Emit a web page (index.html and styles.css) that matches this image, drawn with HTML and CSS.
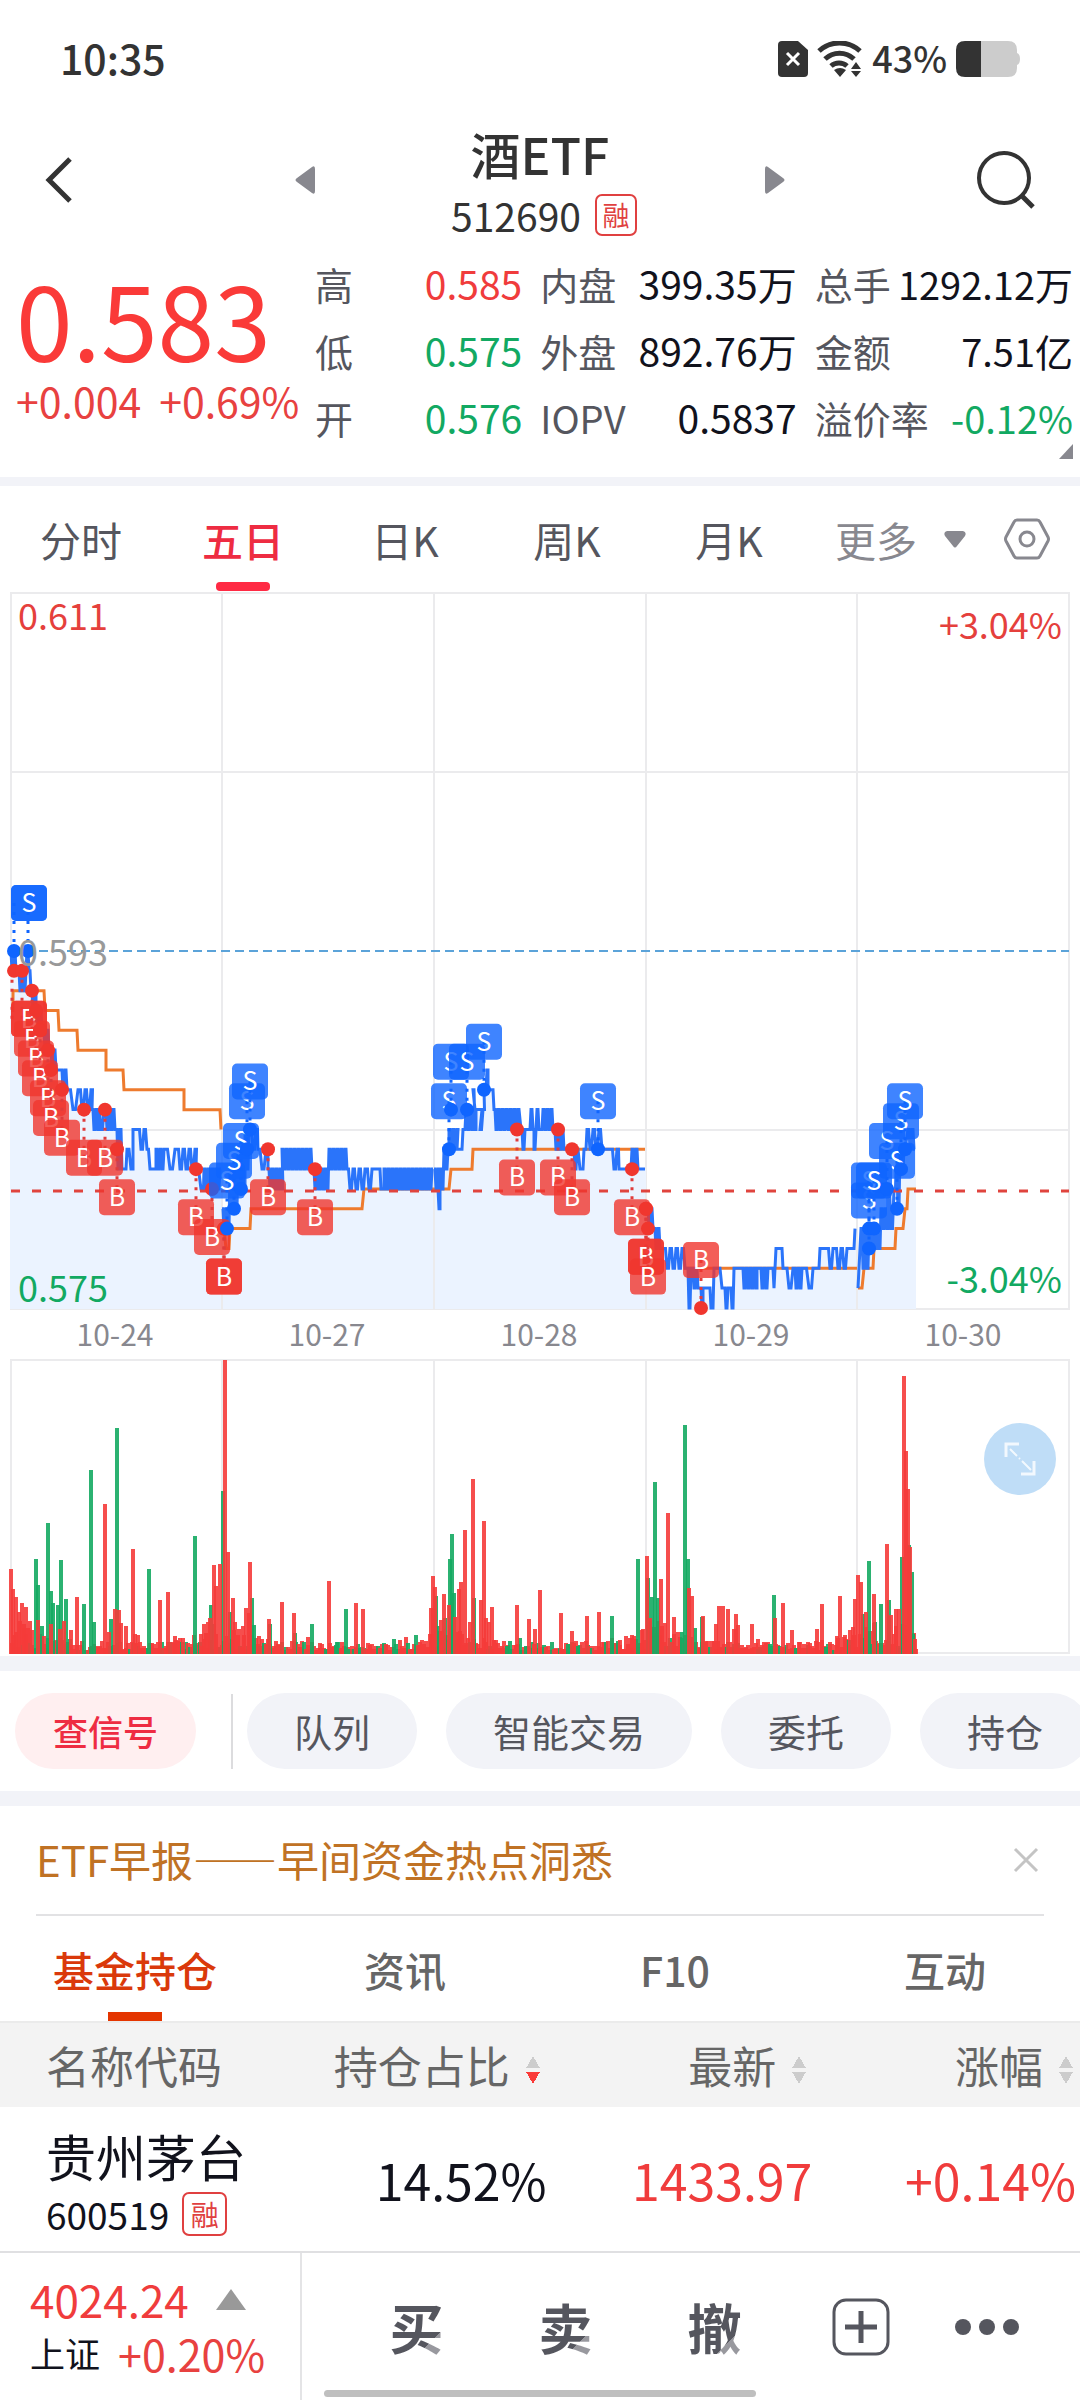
FILE: index.html
```html
<!DOCTYPE html>
<html lang="zh-CN">
<head>
  <meta charset="UTF-8">
  <meta name="viewport" content="width=device-width, initial-scale=1">
  <title>酒ETF 512690</title>
  <link rel="stylesheet" href="styles.css">
</head>
<body>
  <div class="status">
    <span class="time">10:35</span>
    <div class="status-icons">
      <svg width="30" height="36" viewBox="0 0 30 36"><path d="M4 0h16l10 9v23a4 4 0 0 1-4 4H4a4 4 0 0 1-4-4V4a4 4 0 0 1 4-4z" fill="#333"/><path d="M9 12l12 12M21 12L9 24" stroke="#fff" stroke-width="3"/></svg>
      <svg class="wifi" width="46" height="36" viewBox="0 0 46 36" fill="none" stroke="#333" stroke-width="5"><path d="M2 10a30 30 0 0 1 41 0M8 18a21 21 0 0 1 29 0M14 25a12 12 0 0 1 16 0"/><path d="M17 29l6 7 6-7q-6-4-12 0zM34 28l5-7 5 7zM34 30l5 6 5-6z" fill="#333" stroke="none"/></svg>
      <span class="percent">43%</span>
      <svg width="64" height="36" viewBox="0 0 64 36"><path d="M25 0h27q9 0 9 9v3q3 1 3 6t-3 6v3q0 9-9 9H25z" fill="#ccc"/><path d="M25 0H9Q0 0 0 9v18q0 9 9 9h16z" fill="#333"/></svg>
    </div>
  </div>

  <header class="header">
    <button class="icon-btn back" aria-label="返回"><svg width="30" height="48" viewBox="0 0 30 48"><path d="M26 3L5 24l21 21" fill="none" stroke="#333" stroke-width="5"/></svg></button>
    <button class="icon-btn" aria-label="上一只"><svg width="20" height="28" viewBox="0 0 20 28"><path d="M17 1q3-2 3 2v22q0 4-3 2L2 16q-3-2 0-4z" fill="#88888f"/></svg></button>
    <div class="title">
      <h1>酒ETF</h1>
      <div class="code">512690 <span class="tag">融</span></div>
    </div>
    <button class="icon-btn" aria-label="下一只"><svg width="20" height="28" viewBox="0 0 20 28"><path d="M3 1Q0-1 0 3v22q0 4 3 2l15-11q3-2 0-4z" fill="#88888f"/></svg></button>
    <button class="icon-btn search" aria-label="搜索"><svg width="60" height="60" viewBox="0 0 60 60" fill="none" stroke="#333" stroke-width="4"><circle cx="28" cy="28" r="25"/><path d="M45 45l12 12" stroke-width="5"/></svg></button>
  </header>

  <section class="quote">
    <div class="price-box">
      <div class="price">0.583</div>
      <div class="change"><span>+0.004</span><span>+0.69%</span></div>
    </div>
    <dl class="stats s1">
      <div><dt>高</dt><dd class="up">0.585</dd></div>
      <div><dt>低</dt><dd class="down">0.575</dd></div>
      <div><dt>开</dt><dd class="down">0.576</dd></div>
    </dl>
    <dl class="stats s2">
      <div><dt>内盘</dt><dd>399.35万</dd></div>
      <div><dt>外盘</dt><dd>892.76万</dd></div>
      <div><dt>IOPV</dt><dd>0.5837</dd></div>
    </dl>
    <dl class="stats s3">
      <div><dt>总手</dt><dd>1292.12万</dd></div>
      <div><dt>金额</dt><dd>7.51亿</dd></div>
      <div><dt>溢价率</dt><dd class="down">-0.12%</dd></div>
    </dl>
    <span class="corner"></span>
  </section>

  <nav class="periods">
    <button>分时</button>
    <button class="active">五日</button>
    <button>日K</button>
    <button>周K</button>
    <button>月K</button>
    <button class="more">更多 <svg width="22" height="17" viewBox="0 0 22 17"><path d="M3 0h16q4 1 2 5l-8 10q-2 3-4 0L1 5q-2-4 2-5z" fill="#88888f"/></svg></button>
    <button class="gear" aria-label="设置"><svg width="46" height="42" viewBox="0 0 46 42" fill="none" stroke="#88888f" stroke-width="3"><path d="M13 2h20q2 0 3 2l8 15q1 2 0 4l-8 15q-1 2-3 2H13q-2 0-3-2L2 23q-1-2 0-4l8-15q1-2 3-2z"/><circle cx="23" cy="21" r="7"/></svg></button>
  </nav>

  <section class="charts">
    <svg id="chart" viewBox="0 0 1080 1064" role="img" aria-label="五日走势"></svg>
    <button class="expand" aria-label="全屏"><svg width="32" height="34" viewBox="0 0 32 34" fill="none" stroke="#fff"><path d="M15 2H2v13M30 19v13H17" stroke-width="3" opacity=".8"/><path d="M6 7l7 7M15 16l1 1M18 19l9 9" stroke-width="2" opacity=".8"/></svg></button>
  </section>

  <div class="chips">
    <button class="chip signal">查信号</button>
    <span class="divider"></span>
    <button class="chip">队列</button>
    <button class="chip">智能交易</button>
    <button class="chip">委托</button>
    <button class="chip">持仓</button>
  </div>

  <div class="news">
    <a href="#">ETF早报——早间资金热点洞悉</a>
    <button class="icon-btn" aria-label="关闭"><svg width="26" height="26" viewBox="0 0 26 26"><path d="M2 2l22 22M24 2L2 24" stroke="#c4c4c4" stroke-width="3"/></svg></button>
  </div>

  <nav class="tabs">
    <button class="active">基金持仓</button>
    <button>资讯</button>
    <button>F10</button>
    <button>互动</button>
  </nav>

  <table class="holdings">
    <thead>
      <tr>
        <th class="name">名称代码</th>
        <th>持仓占比<i class="sort desc"></i></th>
        <th>最新<i class="sort"></i></th>
        <th>涨幅<i class="sort"></i></th>
      </tr>
    </thead>
    <tbody>
      <tr>
        <td class="name">
          <div class="stock">贵州茅台</div>
          <div class="stock-code">600519 <span class="tag">融</span></div>
        </td>
        <td class="ratio">14.52%</td>
        <td class="last up">1433.97</td>
        <td class="up">+0.14%</td>
      </tr>
    </tbody>
  </table>

  <footer class="bottom">
    <div class="index">
      <div class="index-price up">4024.24 <i class="arrow-up"></i></div>
      <div class="index-change"><span>上证</span><b>+0.20%</b></div>
    </div>
    <div class="actions">
      <button class="trade">买</button>
      <button class="trade">卖</button>
      <button class="trade">撤</button>
      <button aria-label="添加"><svg width="58" height="58" viewBox="0 0 58 58" fill="none" stroke="#55565e"><rect x="2" y="2" width="54" height="54" rx="12" stroke-width="3"/><path d="M29 13v32M13 29h32" stroke-width="5"/></svg></button>
      <button aria-label="更多"><svg width="64" height="16" viewBox="0 0 64 16" fill="#55565e"><circle cx="8" cy="8" r="8"/><circle cx="32" cy="8" r="8"/><circle cx="56" cy="8" r="8"/></svg></button>
    </div>
    <span class="home-bar"></span>
  </footer>

  <script src="chart.js"></script>
</body>
</html>
```
FILE: styles.css
```css
* { box-sizing: border-box; }
body { margin: 0; background: #fff; color: #11121c; font-family: "Noto Sans CJK SC", sans-serif; overflow-x: hidden; }
button { padding: 0; border: none; background: none; font: inherit; color: inherit; cursor: pointer; }
svg { display: block; }
.up { color: #f03c3c; }
.down { color: #12a962; }

.status { display: flex; justify-content: space-between; align-items: center; height: 112px; padding: 6px 60px 0; color: #333; font-weight: 500; }
.time { font-size: 41px; line-height: 56px; padding-bottom: 4px; }
.status-icons { display: flex; align-items: center; gap: 9px; }
.percent { font-size: 36px; line-height: 48px; padding-bottom: 4px; }

.header { display: flex; align-items: center; height: 136px; padding: 0 44px; color: #333; }
.back, .search { flex: 1; }
.search svg { margin-left: auto; }
.title { width: 450px; padding-top: 8px; text-align: center; }
.title h1 { margin: 0; font-size: 50px; line-height: 62px; font-weight: 500; }
.code { display: flex; justify-content: center; align-items: center; gap: 14px; padding-left: 8px; font-size: 39px; line-height: 62px; }
.tag { display: inline-block; width: 42px; border: 2px solid #e04040; border-radius: 7px; color: #e04040; font-size: 27px; line-height: 38px; text-align: center; }

.quote { position: relative; display: flex; height: 238px; padding: 2px 7px 0 0; border-bottom: 9px solid #f2f3f8; }
.price-box { flex: none; width: 315px; padding: 10px 0 0 16px; }
.price { color: #fa3a38; font-size: 102px; line-height: 116px; }
.change { display: flex; gap: 18px; color: #e84140; font-size: 41px; line-height: 48px; white-space: nowrap; }
.stats { flex: 207 1 0; margin: 0 0 0 18px; }
.stats.s1 { margin-left: 0; }
.stats.s2 { flex-grow: 256; }
.stats.s3 { flex-grow: 258; }
.stats div { display: flex; justify-content: space-between; font-size: 38px; line-height: 67px; white-space: nowrap; }
.stats dt { color: #55565e; }
.stats dd { margin: 0; font-size: 39px; }
.stats.s3 dd { font-size: 38px; }
.corner { position: absolute; right: 7px; bottom: 18px; border-left: 14px solid transparent; border-bottom: 15px solid #88888f; }

.periods { display: grid; grid-template-columns: repeat(5, 162fr) 186fr 84fr; height: 106px; color: #55565e; font-size: 41px; line-height: 102px; }
.periods button { position: relative; }
.periods .active { color: #ee2c42; font-weight: 500; }
.periods .active::after { content: ""; position: absolute; left: 50%; bottom: 1px; width: 54px; height: 9px; margin-left: -27px; border-radius: 4px; background: #ff2a44; }
.periods .more { display: flex; justify-content: flex-end; align-items: center; gap: 27px; padding-right: 30px; color: #88888f; }
.periods .gear { display: flex; align-items: center; padding-left: 8px; }

.charts { position: relative; border-bottom: 15px solid #f2f3f8; }
.charts > svg { width: 100%; }
.grid { fill: none; stroke: #ebebed; stroke-width: 2; }
.area { fill: #ebf3ff; }
.blue-line { fill: none; stroke: #2a74fa; stroke-width: 3; }
.avg-line { fill: none; stroke: #ee7b2e; stroke-width: 3; }
.mid-line { stroke: #5ba3d9; stroke-width: 2; stroke-dasharray: 9 5; }
.last-line { stroke: #e0443e; stroke-width: 3; stroke-dasharray: 9 12; }
.axis { font-size: 36px; }
.date { font-size: 30px; fill: #88888f; text-anchor: middle; }
.end { text-anchor: end; }
.red { fill: #e5403c; }
.green { fill: #12a962; }
.gray { fill: #999; }
.mark { fill: #fff; font-size: 25px; text-anchor: middle; }
.buy { fill: #f0362e; }
.sell { fill: #0f65ff; }
.buy-stem { stroke: #e03c3c; stroke-width: 3; stroke-dasharray: 3 6; }
.sell-stem { stroke: #0f65ff; stroke-width: 3; stroke-dasharray: 3 6; }
.vol-up { fill: #f53b3a; }
.vol-down { fill: #14aa62; }
.expand { position: absolute; right: 24px; bottom: 161px; width: 72px; height: 72px; border-radius: 50%; background: #bfddf7; }
.expand svg { margin: 0 auto; }

.chips { display: flex; align-items: center; gap: 29px; height: 135px; padding: 0 0 0 15px; border-bottom: 15px solid #f2f3f8; overflow: hidden; }
.chip { flex: none; height: 76px; padding: 0 47px; border-radius: 38px; background: #f2f3f8; color: #55565e; font-size: 38px; line-height: 72px; }
.chip.signal { padding: 0 38px; background: #ffeff0; color: #ee2c42; font-size: 35px; font-weight: 500; }
.divider { flex: none; width: 2px; height: 75px; margin: 0 -15px 0 6px; background: #dcdcde; }

.news { display: flex; justify-content: space-between; align-items: center; height: 110px; margin: 0 36px; padding-right: 5px; border-bottom: 2px solid #e2e2e4; font-size: 42px; }
.news a { padding-bottom: 4px; color: #c07224; text-decoration: none; }

.tabs { display: grid; grid-template-columns: repeat(4, 1fr); height: 107px; border-bottom: 2px solid #ebebeb; color: #666; font-size: 41px; line-height: 104px; font-weight: 500; }
.tabs button { position: relative; }
.tabs .active { color: #da390b; }
.tabs .active::after { content: ""; position: absolute; left: 50%; bottom: 0; width: 54px; height: 9px; margin-left: -27px; background: #e43500; }

.holdings { width: 100%; border-collapse: collapse; table-layout: fixed; }
.holdings th, .holdings td { padding: 0; text-align: right; font-weight: 400; white-space: nowrap; }
.holdings th { height: 84px; padding-right: 6px; background: #f3f3f3; color: #666; font-size: 44px; line-height: 80px; }
.holdings td { height: 144px; font-size: 50px; padding-right: 4px; }
.holdings .name { width: 280px; padding-left: 46px; text-align: left; }
.holdings td.name { padding-top: 5px; }
.holdings td.last { padding-right: 1px; }
.holdings .ratio { padding-right: 0; }
.sort { display: inline-block; width: 16px; height: 28px; margin-left: 15px; background: conic-gradient(from 150deg at 50% 0, #ccc 60deg, transparent 0) top / 16px 12px no-repeat, conic-gradient(from -30deg at 50% 100%, #ccc 60deg, transparent 0) bottom / 16px 12px no-repeat; }
.sort.desc { background: conic-gradient(from 150deg at 50% 0, #ccc 60deg, transparent 0) top / 16px 12px no-repeat, conic-gradient(from -30deg at 50% 100%, #fa3a38 60deg, transparent 0) bottom / 16px 12px no-repeat; }
.stock { line-height: 64px; }
.stock-code { display: flex; align-items: center; gap: 13px; font-size: 37px; line-height: 54px; }
.stock-code .tag { width: 45px; font-size: 28px; line-height: 40px; }

.bottom { position: relative; display: flex; height: 149px; border-top: 2px solid #e0e0e2; }
.index { width: 302px; padding: 19px 0 0 30px; border-right: 2px solid #e4e4e6; }
.index-price { display: flex; align-items: center; gap: 27px; font-size: 44px; line-height: 54px; }
.arrow-up { border: 15px solid transparent; border-top: 0; border-bottom: 21px solid #999; }
.index-change { display: flex; align-items: center; gap: 18px; font-size: 35px; line-height: 54px; }
.index-change b { color: #e84140; font-size: 43px; font-weight: 400; }
.actions { flex: 1; display: grid; grid-template-columns: 149fr 149fr 149fr 144fr 108fr; align-items: center; padding: 0 39px 0 40px; }
.actions svg { margin: 0 auto; }
.trade { font-size: 54px; line-height: 72px; font-weight: 700; color: transparent; background: linear-gradient(135deg, #55565e 75%, #98989e 75%) center / 54px 58px no-repeat; background-clip: text; -webkit-background-clip: text; }
.home-bar { position: absolute; left: 30%; right: 30%; bottom: 3px; height: 7px; border-radius: 4px; background: #bfbfbf; }
```
FILE: chart.js
```js
const svg = document.getElementById("chart");
const STEP = 19.83;
const MID = 359;
const BOTTOM = 717;
const y = k => Math.min(MID + k * STEP, BOTTOM);

// price track: [x0, x1, top tick, bottom tick, zigzag pitch]; equal ticks draw a flat run
const runs = [
  [10, 17, 0, 1, 2], [18, 24, 1, 2, 2], [27, 30, 0, 1, 2], [31, 36, 2, 3, 2], [36, 42, 3, 4, 2], [43, 49, 4, 5, 2],
  [50, 57, 5, 6, 2], [61, 67, 6, 7, 2], [68, 78, 7, 8, 5], [79, 91, 7, 8, 3], [92, 98, 8, 9, 2], [98, 104, 8, 9, 3],
  [105, 115, 8, 9, 2], [116, 122, 9, 11, 2], [122, 126, 11, 11, 2], [127, 131, 10, 11, 4], [133, 137, 9, 9, 2],
  [138, 147, 9, 10, 3], [150, 156, 11, 11, 2], [156, 164, 10, 11, 2], [165, 176, 10, 11, 5], [177, 195, 10, 11, 3],
  [196, 203, 11, 12, 5], [204, 211, 11, 12, 2], [212, 221, 11, 12, 2],
  [222, 229, 13, 14, 2], [230, 237, 11, 13, 2], [238, 244, 10, 12, 2], [245, 249, 9, 11, 2], [250, 257, 9, 10, 3],
  [258, 267, 10, 11, 4], [268, 282, 11, 12, 2], [282, 312, 10, 11, 2], [313, 328, 11, 12, 2], [329, 346, 10, 11, 2],
  [347, 365, 11, 12, 3], [366, 374, 11, 12, 3], [375, 380, 11, 11, 2], [381, 384, 12, 12, 2], [384, 432, 11, 12, 2],
  [434, 439, 11, 12, 2], [437, 439, 12, 13, 2], [440, 443, 11, 12, 2], [444, 448, 10, 11, 2], [449, 457, 9, 10, 2],
  [457, 462, 10, 10, 2], [463, 465, 9, 9, 2], [466, 475, 8, 9, 2], [473, 476, 7, 9, 2], [476, 482, 8, 8, 2],
  [480, 483, 9, 8, 3], [484, 486, 7, 7, 2], [487, 487, 6, 7, 2], [488, 493, 7, 7, 2], [494, 519, 8, 9, 2],
  [521, 526, 9, 10, 2], [527, 530, 9, 9, 2], [531, 533, 8, 9, 2], [534, 535, 10, 10, 2], [537, 538, 8, 9, 2],
  [539, 542, 9, 9, 2], [543, 553, 8, 9, 2], [554, 564, 9, 10, 2], [565, 572, 10, 10, 2], [573, 578, 10, 11, 2],
  [580, 583, 11, 11, 2], [584, 586, 10, 10, 2], [587, 603, 9, 10, 3], [604, 610, 10, 10, 2], [611, 618, 10, 11, 3],
  [619, 631, 11, 11, 2], [632, 638, 10, 11, 2], [639, 645, 11, 11, 2],
  [647, 653, 13, 14, 2], [654, 661, 14, 15, 2], [664, 685, 15, 16, 3], [687, 691, 16, 18, 2], [692, 699, 16, 17, 2],
  [700, 702, 17, 18, 2], [703, 710, 17, 17, 2], [711, 713, 18, 18, 2], [714, 720, 16, 16, 2], [722, 725, 17, 17, 2],
  [726, 727, 18, 17, 2], [728, 731, 17, 17, 2], [732, 733, 18, 18, 2], [734, 741, 16, 16, 2], [742, 756, 16, 17, 2],
  [757, 760, 16, 16, 2], [760, 769, 16, 17, 2], [770, 773, 16, 16, 2], [774, 774, 17, 17, 2], [776, 782, 15, 15, 2],
  [783, 785, 16, 16, 2], [785, 793, 16, 17, 4], [794, 803, 16, 17, 2], [804, 812, 16, 17, 5], [813, 819, 16, 16, 2],
  [820, 826, 15, 15, 2], [827, 834, 15, 16, 3], [835, 847, 15, 16, 3], [848, 854, 15, 15, 2], [855, 855, 14, 14, 2],
  [858, 858, 17, 17, 2], [861, 868, 14, 16, 2], [869, 880, 14, 15, 2], [881, 887, 13, 14, 2], [888, 894, 12, 14, 3],
  [896, 898, 11, 13, 2], [900, 905, 10, 11, 2], [908, 914, 9, 10, 2]
];
const days = [[10, 221], [222, 433], [434, 646], [647, 857], [858, 916]];

function dayPoints(from, to) {
  const pts = [];
  runs.filter(r => r[0] >= from && r[0] < to).forEach(([x0, x1, a, b, pitch]) => {
    if (a === b) {
      pts.push([x0, a], [x1, a]);
      return;
    }
    for (let x = x0, i = 0; x <= x1; x += pitch, i++) {
      const k = i % 2 ? b : a;
      pts.push([x, k], [x + pitch / 2, k]);
    }
  });
  return pts.map(([x, k]) => x + " " + y(k).toFixed(1));
}

const average = [
  [[11, 3], [13, 3], [13, 2], [44, 2], [45, 3], [58, 3], [59, 4], [77, 4], [78, 5], [106, 5], [106, 6], [123, 6], [124, 7], [184, 7], [184, 8], [220, 8], [221, 9]],
  [[224, 14], [226, 15], [229, 15], [230, 14], [250, 14], [251, 13], [362, 13], [364, 12], [449, 12], [451, 11], [472, 11], [473, 10], [645, 10]],
  [[684, 16], [857, 16]],
  [[858, 17], [862, 17], [864, 16], [873, 16], [874, 15], [895, 15], [896, 14], [903, 14], [905, 13], [907, 13], [908, 12], [916, 12]]
];

const buys = [[12, 1], [22, 1], [32, 2], [36, 3], [40, 4], [48, 5], [51, 6], [62, 7], [84, 8], [105, 8], [117, 10], [196, 11], [212, 12], [224, 14], [224, 14], [268, 10], [315, 11],
  [517, 9], [558, 9], [572, 10], [632, 11], [646, 13], [646, 13], [648, 14], [701, 18]];
const sells = [[14, 0], [28, 0], [227, 14], [234, 13], [241, 12], [247, 10], [250, 9], [449, 10], [451, 8], [467, 8], [484, 7], [598, 10],
  [869, 15], [887, 12], [897, 13], [901, 11], [905, 10], [869, 14], [874, 14]];

let out = '<path class="grid" d="M11 1H1069V717H11zM11 180H1069M11 538H1069M222 1V717M434 1V717M646 1V717M857 1V717"/>';
days.forEach(([from, to]) => {
  const pts = dayPoints(from, to);
  const end = pts[pts.length - 1].split(" ")[0];
  out += `<path class="area" d="M${from} ${BOTTOM}L${pts.join("L")}L${Math.max(end, to)} ${pts[pts.length - 1].split(" ")[1]}V${BOTTOM}z"/>`;
});
out += '<path class="grid" d="M222 600V717M434 600V717M646 600V717M857 600V717"/>';
average.forEach(line => {
  out += `<path class="avg-line" d="M${line.map(([x, k]) => x + " " + y(k)).join("L")}"/>`;
});
days.forEach(([from, to]) => {
  out += `<path class="blue-line" d="M${dayPoints(from, to).join("L")}"/>`;
});
out += `<path class="mid-line" d="M11 ${MID}H1069"/><path class="last-line" d="M11 599H1069"/>`;

function marks(list, letter, cls, dir) {
  let s = "";
  list.forEach(([x, k]) => {
    const cx = Math.max(x, 29);
    const cy = y(k) + (k >= 18 ? -48 : 48 * dir);
    s += `<path class="${cls}-stem" d="M${x} ${y(k)}V${cy}"/>`;
    s += `<rect class="${cls}" x="${cx - 18}" y="${cy - 18}" width="36" height="36" rx="5" opacity="0.8"/>`;
    s += `<text class="mark" x="${cx}" y="${cy + 9}">${letter}</text>`;
  });
  list.forEach(([x, k]) => {
    s += `<circle class="${cls}" cx="${Math.max(x, 14)}" cy="${y(k)}" r="7"/>`;
  });
  return s;
}
out += marks(buys, "B", "buy", 1) + marks(sells, "S", "sell", -1);

out += `<text class="axis red" x="18" y="38">0.611</text>
  <text class="axis red end" x="1062" y="47">+3.04%</text>
  <text class="axis gray" x="18" y="374">0.593</text>
  <text class="axis green" x="18" y="710">0.575</text>
  <text class="axis green end" x="1062" y="701">-3.04%</text>`;
["10-24", "10-27", "10-28", "10-29", "10-30"].forEach((d, i) => {
  out += `<text class="date" x="${115 + i * 212}" y="754">${d}</text>`;
});

// volume bars: "x height"
const up = "11 85,13 65,16 57,19 42,22 51,24 30,26 47,30 33,32 24,38 34,44 18,51 30,60 25,64 33,71 24,77 57,105 150,109 22,115 45,119 44,121 31,126 28,133 105,135 20,138 19,160 54,168 62,175 18,183 16,201 20,204 30,208 32,210 36,214 89,216 68,220 90,225 294,228 102,233 56,235 32,239 25,243 28,246 46,249 41,250 92,259 18,269 35,282 52,294 41,308 17,329 73,356 51,363 45,431 46,433 78,435 67,441 34,444 60,449 49,455 37,459 65,461 72,465 124,470 32,473 175,481 54,484 133,486 36,489 32,492 47,517 49,529 35,535 25,540 64,561 41,572 23,587 38,599 42,620 14,632 19,643 25,647 98,650 36,661 75,665 31,668 141,674 37,689 66,692 58,703 38,716 30,719 48,723 48,728 45,734 25,736 40,738 29,752 30,758 15,775 36,783 51,792 24,799 12,808 12,817 25,822 50,837 18,840 58,845 19,850 24,853 27,855 55,858 79,861 72,866 42,874 60,887 110,891 39,896 45,899 45,904 278,906 203,908 165,910 107,915 15";
const down = "36 95,38 69,42 28,48 131,51 63,53 51,58 49,61 94,66 55,84 50,91 184,94 32,111 35,117 226,149 85,195 118,211 49,223 163,230 42,252 56,254 29,270 30,295 21,312 30,337 12,346 45,436 58,438 28,445 36,450 95,452 120,454 61,474 56,507 8,520 16,612 38,638 95,648 76,652 57,655 172,658 56,682 22,685 229,688 95,695 26,702 37,774 59,863 40,869 93,875 32,881 50,889 54,902 97,909 109,912 82,913 20";
const VOL_BOTTOM = 1062;
const bar = (x, h, cls) => `<rect class="${cls}" x="${x - 2}" y="${VOL_BOTTOM - h}" width="4" height="${h}" opacity="0.9"/>`;

out += '<path class="grid" d="M11 768H1069V1061H11zM222 768V1061M434 768V1061M646 768V1061M857 768V1061"/>';
let seed = 7;
for (let x = 12; x < 918; x += 2) {
  seed = (seed * 1103 + 4721) % 9973;
  const r = seed / 9973;
  const edge = Math.min(...[20, 222, 440, 655, 870, 905].map(d => Math.abs(x - d)));
  out += bar(x, Math.round(4 + r * (8 + 26 * Math.exp(-edge / 24))), seed % 4 ? "vol-up" : "vol-down");
}
down.split(",").forEach(p => { const [x, h] = p.split(" "); out += bar(x, h, "vol-down"); });
up.split(",").forEach(p => { const [x, h] = p.split(" "); out += bar(x, h, "vol-up"); });
svg.innerHTML = out;
```
